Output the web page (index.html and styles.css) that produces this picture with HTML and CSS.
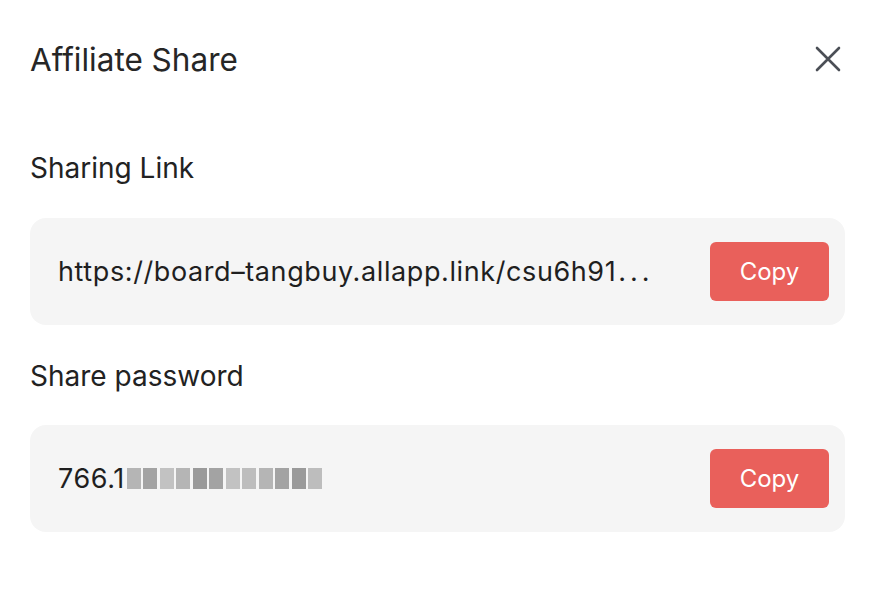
FILE: index.html
```html
<!DOCTYPE html>
<html>
<head>
<meta charset="utf-8">
<link rel="stylesheet" href="styles.css">
</head>
<body>
<div class="dialog">
  <div class="header">
    <h1 class="title">Affiliate Share</h1>
    <button class="close" aria-label="Close">
      <svg width="28" height="28" viewBox="0 0 28 28"><path d="M3 3 L25 25 M25 3 L3 25" stroke="#4b4f56" stroke-width="2.6" stroke-linecap="round" fill="none"/></svg>
    </button>
  </div>
  <div class="section">
    <div class="label">Sharing Link</div>
    <div class="box">
      <div class="value url">https://board–tangbuy.allapp.link/csu6h91<span class="dots">...</span></div>
      <button class="copy">Copy</button>
    </div>
  </div>
  <div class="section">
    <div class="label">Share password</div>
    <div class="box">
      <div class="value">766.1<span class="mosaic"><i class="m1"></i><i class="m2"></i><i class="m3"></i><i class="m1"></i><i class="m4"></i><i class="m2"></i><i class="m3"></i><i class="m5"></i><i class="m1"></i><i class="m2"></i><i class="m4"></i><i class="m5"></i></span></div>
      <button class="copy">Copy</button>
    </div>
  </div>
</div>
</body>
</html>
```
FILE: styles.css
```css
* { box-sizing: border-box; }
html, body { margin: 0; padding: 0; background: #fff; }
body { font-family: Inter, "Liberation Sans", sans-serif; color: #222; font-feature-settings: "calt" 0; }
.dialog { width: 874px; height: 598px; padding: 0 29px 0 30px; }
.header { display: flex; align-items: center; justify-content: space-between; height: 118px; }
.title { margin: 0; font-size: 31.5px; font-weight: 400; color: #262626; }
.close { background: none; border: 0; padding: 0; margin-right: 3px; width: 28px; height: 28px; display: flex; }
.section { display: flex; flex-direction: column; }
.label { font-size: 28px; height: 100px; line-height: 100px; color: #222; }
.section + .section .label { line-height: 102px; }
.box { background: #f5f5f5; border-radius: 16px; height: 107px; display: flex; align-items: center; padding: 0 16px 0 28px; gap: 30px; }
.value { flex: 1; min-width: 0; font-size: 27px; color: #1f1f1f; white-space: nowrap; overflow: hidden; display: flex; align-items: center; letter-spacing: 0.6px; }
.url { display: block; }
.dots { letter-spacing: 4px; margin-left: 2px; }
.copy { flex: none; width: 119px; height: 59px; border: 0; border-radius: 6px; background: #e9605b; color: #fff; font-family: Inter, "Liberation Sans", sans-serif; font-size: 24px; }
.mosaic { display: inline-flex; height: 21px; margin-left: 2px; }
.mosaic i { display: block; width: 14px; height: 21px; margin-right: 2.5px; }
.m1 { background: #b5b5b5; }
.m2 { background: #a3a3a3; }
.m3 { background: #c2c2c2; }
.m4 { background: #9a9a9a; }
.m5 { background: #bdbdbd; }
```
